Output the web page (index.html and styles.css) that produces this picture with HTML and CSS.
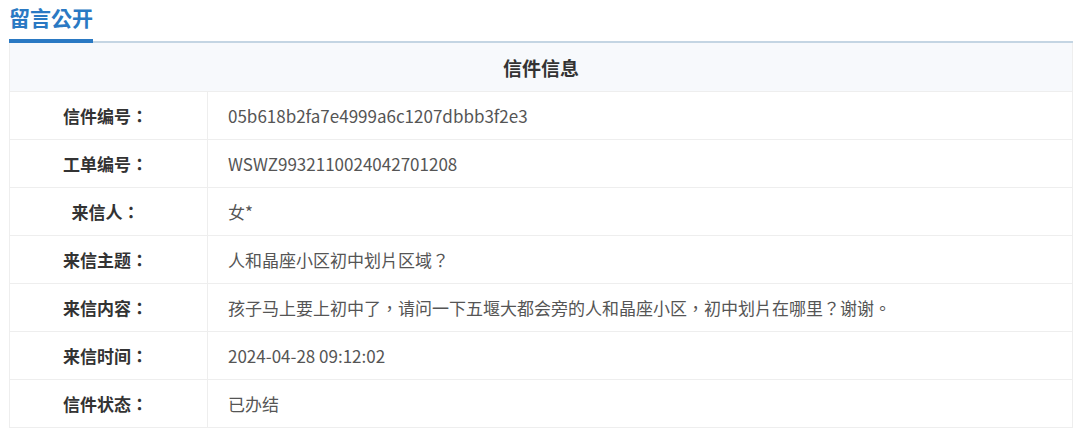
FILE: index.html
```html
<!DOCTYPE html>
<html lang="zh-TW">
<head>
<meta charset="UTF-8">
<meta name="viewport" content="width=device-width, initial-scale=1.0">
<title>留言公开</title>
<link rel="stylesheet" href="styles.css">
</head>
<body>

<div class="container">
    <div class="tab-head">
        <span class="tab-title">留言公开</span>
    </div>

    <table class="info-table">
        <thead>
            <tr>
                <th colspan="2">信件信息</th>
            </tr>
        </thead>
        <tbody>
            <tr>
                <td class="label">信件编号：</td>
                <td class="value">05b618b2fa7e4999a6c1207dbbb3f2e3</td>
            </tr>
            <tr>
                <td class="label">工单编号：</td>
                <td class="value">WSWZ9932110024042701208</td>
            </tr>
            <tr>
                <td class="label">来信人：</td>
                <td class="value">女*</td>
            </tr>
            <tr>
                <td class="label">来信主题：</td>
                <td class="value">人和晶座小区初中划片区域？</td>
            </tr>
            <tr>
                <td class="label">来信内容：</td>
                <td class="value">孩子马上要上初中了，请问一下五堰大都会旁的人和晶座小区，初中划片在哪里？谢谢。</td>
            </tr>
            <tr>
                <td class="label">来信时间：</td>
                <td class="value">2024-04-28 09:12:02</td>
            </tr>
            <tr>
                <td class="label">信件状态：</td>
                <td class="value">已办结</td>
            </tr>
        </tbody>
    </table>
</div>

</body>
</html>
```

FILE: styles.css
```css
body {
    font-family: "Noto Sans CJK TC", "Noto Sans", sans-serif;
    background-color: #fff;
    margin: 0;
    padding: 0;
}
.container {
    width: 1064px;
    margin-left: 9px;
}
.tab-head {
    height: 41px;
    border-bottom: 2px solid #c4d5e3;
    display: flex;
    align-items: flex-start;
}
.tab-title {
    display: block;
    width: 84px;
    height: 43px;
    line-height: 34px;
    font-size: 21px;
    font-weight: bold;
    color: #2a79c3;
    border-bottom: 4px solid #2a79c3;
    box-sizing: border-box;
    white-space: nowrap;
}
.info-table {
    width: 100%;
    border-collapse: collapse;
    border: 1px solid #eeeeee;
    border-top: none;
}
.info-table th {
    height: 48px;
    padding: 0;
    background-color: #f7f9fc;
    font-size: 19px;
    font-weight: bold;
    color: #333;
    border-bottom: 1px solid #eeeeee;
}
.info-table td {
    height: 47px;
    padding: 0;
    border-bottom: 1px solid #eeeeee;
    font-size: 17px;
}
.info-table .label {
    width: 191px;
    text-align: center;
    font-weight: bold;
    color: #333;
    border-right: 1px solid #eeeeee;
    padding-right: 6px;
}
.info-table .value {
    padding-left: 20px;
    color: #555;
}
```
